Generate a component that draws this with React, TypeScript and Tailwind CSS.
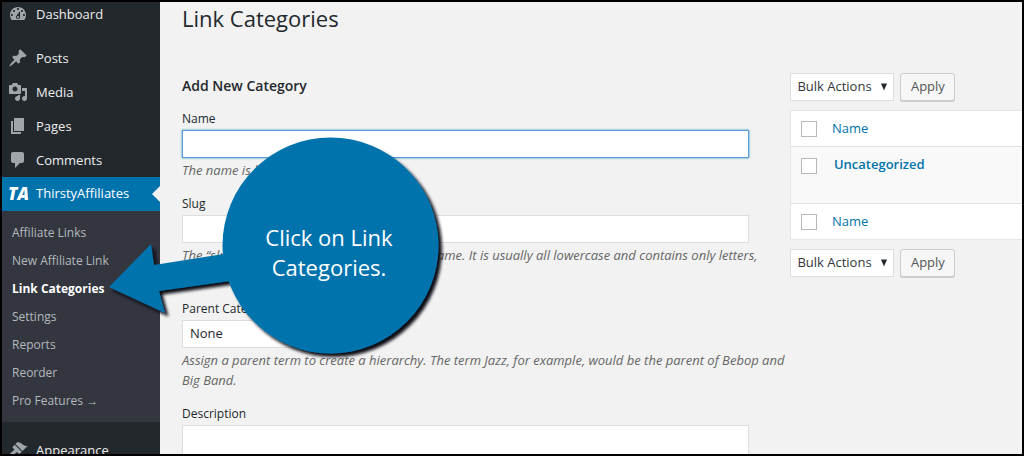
import React from 'react';

const ICONS = {
  dashboard:
    'M3.76 16h12.48c1.1-1.37 1.76-3.11 1.76-5 0-4.42-3.58-8-8-8s-8 3.58-8 8c0 1.89.66 3.63 1.76 5zM10 4c.55 0 1 .45 1 1s-.45 1-1 1-1-.45-1-1 .45-1 1-1zM6 6c.55 0 1 .45 1 1s-.45 1-1 1-1-.45-1-1 .45-1 1-1zm8 0c.55 0 1 .45 1 1s-.45 1-1 1-1-.45-1-1 .45-1 1-1zm-5.37 5.55L12 7v6c0 1.1-.9 2-2 2s-2-.9-2-2c0-.57.24-1.08.63-1.45zM4 10c.55 0 1 .45 1 1s-.45 1-1 1-1-.45-1-1 .45-1 1-1zm12 0c.55 0 1 .45 1 1s-.45 1-1 1-1-.45-1-1 .45-1 1-1zm-5 3c0-.55-.45-1-1-1s-1 .45-1 1 .45 1 1 1 1-.45 1-1z',
  posts:
    'M10.44 3.02l1.82-1.82 6.36 6.35-1.83 1.82c-1.05-.68-2.48-.57-3.41.36l-.75.75c-.92.93-1.04 2.35-.35 3.41l-1.83 1.82-2.41-2.41-2.8 2.79c-.42.42-3.38 2.71-3.8 2.29s1.86-3.39 2.28-3.81l2.79-2.79L4.1 9.36l1.83-1.82c1.05.69 2.48.57 3.4-.36l.75-.75c.93-.92 1.05-2.35.36-3.41z',
  media:
    'M13 11V4c0-.55-.45-1-1-1h-1.67L9 1H5L3.67 3H2c-.55 0-1 .45-1 1v7c0 .55.45 1 1 1h10c.55 0 1-.45 1-1zM7 4.5c1.38 0 2.5 1.12 2.5 2.5S8.38 9.5 7 9.5 4.5 8.38 4.5 7 5.62 4.5 7 4.5zM14 6h5v10.5c0 1.38-1.12 2.5-2.5 2.5S14 17.88 14 16.5s1.12-2.5 2.5-2.5c.17 0 .34.02.5.05V9h-3V6zm-4 8.05V13h2v3.5c0 1.38-1.12 2.5-2.5 2.5S7 17.88 7 16.5 8.12 14 9.5 14c.17 0 .34.02.5.05z',
  pages: 'M6 15V2h10v13H6zm-1 1h8v2H3V5h2v11z',
  comments: 'M5 2h9c1.1 0 2 .9 2 2v7c0 1.1-.9 2-2 2h-2l-5 5v-5H5c-1.1 0-2-.9-2-2V4c0-1.1.9-2 2-2z',
  appearance:
    'M14.48 11.06L7.41 3.99l1.5-1.5c.5-.56 2.3-.47 3.51.32 1.21.8 1.43 1.28 2.91 2.1 1.18.64 2.45 1.26 4.45.85zm-.71.71L6.7 4.7 4.93 6.47c-.39.39-.39 1.02 0 1.41l1.06 1.06c.39.39.39 1.03 0 1.42-.6.6-1.43 1.11-2.21 1.69-.35.26-.7.53-1.01.84C1.43 14.23.4 16.08 1.4 17.07c.99 1 2.84-.03 4.18-1.36.31-.31.58-.66.85-1.02.57-.78 1.08-1.61 1.69-2.21.39-.39 1.02-.39 1.41 0l1.06 1.06c.39.39 1.02.39 1.41 0z'
};

const MENU: { icon: keyof typeof ICONS; label: string }[] = [
  { icon: 'posts', label: 'Posts' },
  { icon: 'media', label: 'Media' },
  { icon: 'pages', label: 'Pages' },
  { icon: 'comments', label: 'Comments' }
];

const SUBMENU = [
  'Affiliate Links',
  'New Affiliate Link',
  'Link Categories',
  'Settings',
  'Reports',
  'Reorder',
  'Pro Features →'
];

function MenuItem({ icon, label, height = 'h-[34px]' }: { icon: keyof typeof ICONS; label: string; height?: string }) {
  return (
    <a href="#" className={`flex shrink-0 items-center gap-2 pl-1.5 text-[13px] leading-5 text-[#eee] ${height}`}>
      <svg viewBox="0 0 20 20" className="size-5 shrink-0 fill-[#a0a5aa]" aria-hidden="true">
        <path d={ICONS[icon]} />
      </svg>
      {label}
    </a>
  );
}

function Sidebar() {
  return (
    <nav className="flex w-[158px] shrink-0 flex-col bg-[#23282d]">
      <MenuItem icon="dashboard" label="Dashboard" height="h-6 mb-[15px]" />
      {MENU.map(item => (
        <MenuItem key={item.label} {...item} />
      ))}

      {/* Current plugin, with the notch pointing at the page */}
      <a href="#" className="relative flex h-[34px] shrink-0 items-center gap-2 bg-[#0073ad] pl-1.5 text-[13px] text-white">
        <span className="w-5 text-[17px] leading-5 font-extrabold italic">TA</span>
        ThirstyAffiliates
        <span className="absolute top-1/2 right-0 -translate-y-1/2 border-8 border-transparent border-r-[#f1f2f1]" />
      </a>

      <ul className="shrink-0 bg-[#33363e] pt-2 pb-[7px]">
        {SUBMENU.map(label => (
          <li key={label}>
            <a
              href="#"
              className={`flex h-7 items-center pl-2.5 text-xs whitespace-nowrap ${label === 'Link Categories' ? 'font-bold text-white' : 'text-[#b4b9be]'}`}
            >
              {label}
            </a>
          </li>
        ))}
      </ul>

      <div className="mt-[11px]">
        <MenuItem icon="appearance" label="Appearance" />
      </div>
    </nav>
  );
}

function Arrow() {
  return (
    <svg viewBox="0 0 8 8" className="pointer-events-none absolute top-2.5 right-1.5 size-2 fill-[#23282d]" aria-hidden="true">
      <path d="M1 0.5h6L4 7.5z" />
    </svg>
  );
}

function Field({ id, label, help, children }: { id: string; label: string; help?: React.ReactNode; children: React.ReactNode }) {
  return (
    <div>
      <label htmlFor={id} className="block h-[21px] text-xs leading-5">
        {label}
      </label>
      {children}
      {help && <p className="mt-0.5 leading-5 whitespace-nowrap text-[#666] italic">{help}</p>}
    </div>
  );
}

function AddCategoryForm() {
  return (
    <form className="w-[71%] shrink-0">
      <h2 className="mb-[13px] text-sm leading-5 font-semibold text-[#23282d]">Add New Category</h2>
      <div className="flex flex-col gap-3.5">
        <Field id="tag-name" label="Name" help="The name is how it appears on the site.">
          <input
            id="tag-name"
            type="text"
            className="block h-7 w-[95%] border border-[#5b9dd9] bg-white px-2 shadow-[0_0_2px_#1e8cbe] outline-none"
          />
        </Field>
        <Field
          id="tag-slug"
          label="Slug"
          help={
            <>
              The “slug” is the URL-friendly version of the name. It is usually all lowercase and contains only letters,
              <br />
              numbers, and hyphens.
            </>
          }
        >
          <input id="tag-slug" type="text" className="block h-7 w-[95%] border border-[#ddd] bg-white px-2 outline-none" />
        </Field>
        <Field
          id="parent"
          label="Parent Category"
          help={
            <>
              Assign a parent term to create a hierarchy. The term Jazz, for example, would be the parent of Bebop and
              <br />
              Big Band.
            </>
          }
        >
          <select id="parent" className="block h-7 w-[120px] appearance-none border border-[#ddd] bg-white px-[7px] text-[13px]">
            <option>None</option>
          </select>
        </Field>
        <Field id="tag-description" label="Description">
          <textarea id="tag-description" rows={5} className="block w-[95%] resize-none border border-[#ddd] bg-white p-2" />
        </Field>
      </div>
    </form>
  );
}

function BulkActions({ id }: { id: string }) {
  return (
    <div className="flex gap-1.5">
      <div className="relative">
        <select
          id={id}
          aria-label="Select bulk action"
          className="block h-7 w-[104px] appearance-none border border-[#ddd] bg-white pl-1.5 text-[13px] text-[#32373c]"
        >
          <option>Bulk Actions</option>
        </select>
        <Arrow />
      </div>
      <button
        type="button"
        className="h-7 w-[55px] rounded-[3px] border border-[#ccc] bg-[#f7f7f7] text-[13px] text-[#555] shadow-[0_1px_0_#ccc]"
      >
        Apply
      </button>
    </div>
  );
}

function Checkbox({ label }: { label: string }) {
  return (
    <input type="checkbox" aria-label={label} className="block size-4 appearance-none border border-[#b4b9be] bg-white" />
  );
}

function CategoryTable() {
  return (
    <section className="-mt-[3px] min-w-0 flex-1 pl-3">
      <BulkActions id="bulk-top" />
      <table className="my-[9px] w-full border-collapse border-y border-l border-[#e5e5e5] bg-white text-left text-[13px] text-[#0073aa]">
        <thead>
          <tr className="h-9 border-b border-[#e1e1e1]">
            <th className="w-[41px] pl-2.5">
              <Checkbox label="Select all" />
            </th>
            <th className="font-normal">
              <a href="#">Name</a>
            </th>
          </tr>
        </thead>
        <tbody>
          <tr className="h-[57px] bg-[#f9f9f9] align-top">
            <td className="pt-[11px] pl-2.5">
              <Checkbox label="Select Uncategorized" />
            </td>
            <td className="pt-2 pl-0.5">
              <a href="#" className="font-semibold">
                Uncategorized
              </a>
            </td>
          </tr>
        </tbody>
        <tfoot>
          <tr className="h-9 border-t border-[#e1e1e1]">
            <td className="pl-2.5">
              <Checkbox label="Select all" />
            </td>
            <td>
              <a href="#">Name</a>
            </td>
          </tr>
        </tfoot>
      </table>
      <BulkActions id="bulk-bottom" />
    </section>
  );
}

// Round hint with an arrow to the highlighted submenu entry
function Callout() {
  return (
    <div className="pointer-events-none absolute top-[125px] left-[97px] h-[245px] w-[360px]">
      <svg viewBox="99 127 360 245" className="size-full" aria-hidden="true">
        <defs>
          <filter id="callout-shadow" x="-10%" y="-10%" width="120%" height="120%">
            <feDropShadow dx="3.500" dy="3.500" stdDeviation="1.500" floodColor="#0a0f18" floodOpacity="1" />
          </filter>
        </defs>
        <g fill="#0073ad" filter="url(#callout-shadow)">
          <path d="M109 287L151 244L154 265L230 253V281L159 291L165 313Z" />
          <circle cx="330.500" cy="245.500" r="108" />
        </g>
      </svg>
      <p className="absolute top-[95px] left-[122px] w-[216px] text-center text-[22px] leading-[30px] text-white">
        Click on Link
        <br />
        Categories.
      </p>
    </div>
  );
}

export default function App() {
  return (
    <div className="relative flex h-screen overflow-hidden border-2 border-black bg-[#f1f2f1] font-['Open_Sans','Noto_Sans',sans-serif] text-[13px] text-[#23282d]">
      <Sidebar />
      <main className="min-w-0 flex-1 pl-[22px]">
        <h1 className="text-[22px] leading-8">Link Categories</h1>
        <div className="mt-[42px] flex">
          <AddCategoryForm />
          <CategoryTable />
        </div>
      </main>
      <Callout />
    </div>
  );
}
